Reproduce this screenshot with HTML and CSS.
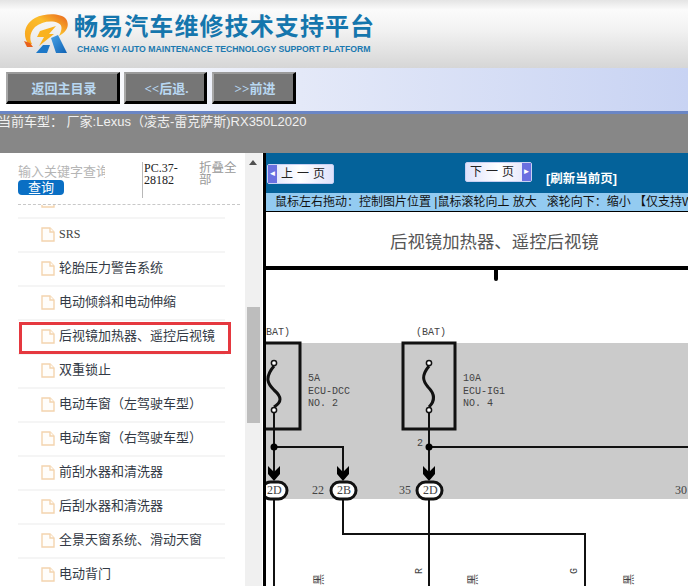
FILE: index.html
```html
<!DOCTYPE html>
<html lang="zh-CN">
<head>
    <meta charset="UTF-8">
    <meta name="viewport" content="width=device-width, initial-scale=1.0">
    <title>畅易汽车维修技术支持平台</title>
    <link rel="stylesheet" href="styles.css">
</head>
<body>
    <header class="top">
        <svg class="logo" width="46" height="40" viewBox="0 0 46 40">
            <defs>
                <linearGradient id="ring" x1="0" y1="1" x2="1" y2="0">
                    <stop offset="0" stop-color="#f7a21b"/>
                    <stop offset="0.6" stop-color="#fbbd2c"/>
                    <stop offset="1" stop-color="#e8611c"/>
                </linearGradient>
                <linearGradient id="leg" x1="0" y1="0" x2="1" y2="1">
                    <stop offset="0" stop-color="#4aa3e6"/>
                    <stop offset="1" stop-color="#0f62b4"/>
                </linearGradient>
            </defs>
            <path d="M6 31C-1 22 1 10 12 4C22 -1 38 -1 43 5C47 11 44 18 36 22C39 16 40 11 35 9C28 6 18 8 12 13C7 18 6 25 9 30Z" fill="url(#ring)"/>
            <path d="M1 27L7 29L10 33L4 33Z" fill="#e8611c"/>
            <path d="M17 17L33 12L26 20L31 20L16 32L21 23L14 23Z" fill="#f9b21f"/>
            <path d="M13 39L20 31L27 31L24 39Z" fill="#1d78c8"/>
            <path d="M28 24L35 21L44 39L33 39Z" fill="url(#leg)"/>
        </svg>
        <div class="brand">
            <div class="brand-cn">畅易汽车维修技术支持平台</div>
            <div class="brand-en">CHANG YI AUTO MAINTENANCE TECHNOLOGY SUPPORT PLATFORM</div>
        </div>
    </header>

    <nav class="toolbar">
        <button class="nav-btn home">返回主目录</button>
        <button class="nav-btn back">&lt;&lt;后退.</button>
        <button class="nav-btn next">&gt;&gt;前进</button>
    </nav>

    <div class="car-info">当前车型： 厂家:Lexus（凌志-雷克萨斯)RX350L2020</div>

    <div class="content">
        <aside class="sidebar">
            <div class="side-panel">
                <div class="search">
                    <div class="search-box">
                        <input class="search-input" type="text" placeholder="输入关键字查询">
                        <button class="search-btn">查询</button>
                    </div>
                    <div class="doc-code">PC.37-28182</div>
                    <div class="fold-all">折叠全部</div>
                </div>
                <ul class="tree">
                    <li class="tree-item"><svg class="file" viewBox="0 0 14 15"><path d="M1 1H9L13 5V14H1Z"/><path d="M9 1V5H13"/></svg></li>
                    <li class="tree-item"><svg class="file" viewBox="0 0 14 15"><path d="M1 1H9L13 5V14H1Z"/><path d="M9 1V5H13"/></svg><span class="srs">SRS</span></li>
                    <li class="tree-item"><svg class="file" viewBox="0 0 14 15"><path d="M1 1H9L13 5V14H1Z"/><path d="M9 1V5H13"/></svg>轮胎压力警告系统</li>
                    <li class="tree-item"><svg class="file" viewBox="0 0 14 15"><path d="M1 1H9L13 5V14H1Z"/><path d="M9 1V5H13"/></svg>电动倾斜和电动伸缩</li>
                    <li class="tree-item active"><svg class="file" viewBox="0 0 14 15"><path d="M1 1H9L13 5V14H1Z"/><path d="M9 1V5H13"/></svg>后视镜加热器、遥控后视镜</li>
                    <li class="tree-item"><svg class="file" viewBox="0 0 14 15"><path d="M1 1H9L13 5V14H1Z"/><path d="M9 1V5H13"/></svg>双重锁止</li>
                    <li class="tree-item"><svg class="file" viewBox="0 0 14 15"><path d="M1 1H9L13 5V14H1Z"/><path d="M9 1V5H13"/></svg>电动车窗（左驾驶车型）</li>
                    <li class="tree-item"><svg class="file" viewBox="0 0 14 15"><path d="M1 1H9L13 5V14H1Z"/><path d="M9 1V5H13"/></svg>电动车窗（右驾驶车型）</li>
                    <li class="tree-item"><svg class="file" viewBox="0 0 14 15"><path d="M1 1H9L13 5V14H1Z"/><path d="M9 1V5H13"/></svg>前刮水器和清洗器</li>
                    <li class="tree-item"><svg class="file" viewBox="0 0 14 15"><path d="M1 1H9L13 5V14H1Z"/><path d="M9 1V5H13"/></svg>后刮水器和清洗器</li>
                    <li class="tree-item"><svg class="file" viewBox="0 0 14 15"><path d="M1 1H9L13 5V14H1Z"/><path d="M9 1V5H13"/></svg>全景天窗系统、滑动天窗</li>
                    <li class="tree-item"><svg class="file" viewBox="0 0 14 15"><path d="M1 1H9L13 5V14H1Z"/><path d="M9 1V5H13"/></svg>电动背门</li>
                </ul>
            </div>
            <div class="scrollbar">
                <div class="scroll-arrow"></div>
                <div class="scroll-thumb"></div>
            </div>
        </aside>

        <main class="viewer">
            <div class="pager">
                <button class="page-btn prev"><span class="page-arrow">◄</span><span class="page-text">上一页</span></button>
                <button class="page-btn following"><span class="page-text">下一页</span><span class="page-arrow">►</span></button>
                <a class="refresh">[刷新当前页]</a>
            </div>
            <div class="hint">鼠标左右拖动：控制图片位置 |鼠标滚轮向上 放大&nbsp;&nbsp;&nbsp;滚轮向下：缩小 【仅支持W</div>

            <!-- 电路图，坐标相对于图片左上角 -->
            <svg class="diagram" width="422" height="374" viewBox="266 212 422 374">
                <rect x="266" y="343" width="422" height="156" fill="#cbcbcb"/>
                <text class="wd-title" x="390" y="248">后视镜加热器、遥控后视镜</text>
                <rect x="266" y="266" width="422" height="4" fill="#000"/>
                <rect x="494" y="268" width="4" height="13" rx="2" fill="#000"/>

                <g class="wd-label">
                    <text x="266" y="335">BAT)</text>
                    <text x="416" y="335">(BAT)</text>
                    <text x="308" y="381">5A</text>
                    <text x="308" y="394">ECU-DCC</text>
                    <text x="308" y="403" dy="3">NO. 2</text>
                    <text x="463" y="381">10A</text>
                    <text x="463" y="394">ECU-IG1</text>
                    <text x="463" y="403" dy="3">NO. 4</text>
                    <text x="417" y="446">2</text>
                    <text class="wd-num" x="312" y="494">22</text>
                    <text class="wd-num" x="399" y="494">35</text>
                    <text class="wd-num" x="675" y="494">30</text>
                </g>

                <g class="wd-line">
                    <path class="wd-box" d="M266 343H300V429H266"/>
                    <rect class="wd-box" x="403" y="343" width="52" height="86"/>
                    <path class="wd-fuse" d="M274 366C264 378 268 384 274 390C282 397 282 402 274 407"/>
                    <path class="wd-fuse" d="M429 366C421 376 423 381 428 387C435 394 435 401 429 407"/>
                    <path d="M274 413V478M274 447H343V478M429 413V478M429 447H688"/>
                    <path d="M274 500V586M343 500V534H585V586M429 500V586"/>
                    <circle class="wd-pin" cx="274" cy="363" r="2.6"/>
                    <circle class="wd-pin" cx="274" cy="410" r="2.6"/>
                    <circle class="wd-pin" cx="429" cy="363" r="2.6"/>
                    <circle class="wd-pin" cx="429" cy="410" r="2.6"/>
                </g>
                <circle cx="274" cy="447" r="3.5"/>
                <circle cx="429" cy="447" r="3.5"/>
                <path d="M268 466L274 472L280 466V474L274 481L268 474Z"/>
                <path d="M337 466L343 472L349 466V474L343 481L337 474Z"/>
                <path d="M423 466L429 472L435 466V474L429 481L423 474Z"/>

                <rect class="wd-conn" x="262" y="482" width="25" height="17" rx="8.5"/>
                <rect class="wd-conn" x="331" y="482" width="25" height="17" rx="8.5"/>
                <rect class="wd-conn" x="417" y="482" width="25" height="17" rx="8.5"/>
                <g class="wd-label">
                    <text class="wd-num" x="267" y="494">2D</text>
                    <text class="wd-num" x="337" y="494">2B</text>
                    <text class="wd-num" x="423" y="494">2D</text>
                </g>

                <g class="wd-label">
                    <text transform="translate(422 574) rotate(-90)">R</text>
                    <text transform="translate(577 574) rotate(-90)">G</text>
                    <text class="wd-wire" transform="translate(323 585) rotate(-90)">黑</text>
                    <text class="wd-wire" transform="translate(477 585) rotate(-90)">黑</text>
                    <text class="wd-wire" transform="translate(633 585) rotate(-90)">黑</text>
                </g>
            </svg>
        </main>
    </div>
</body>
</html>
```

FILE: styles.css
```css
body {
    margin: 0;
    height: 586px;
    overflow: hidden;
    background-color: #ffffff;
    font-family: "Liberation Sans", "Noto Sans CJK SC", sans-serif;
}

/* 顶部标志区 */
.top {
    height: 68px;
    box-sizing: border-box;
    padding: 12px 0 0 23px;
    display: flex;
    background: linear-gradient(#e4e4e4 0, #fbfbfb 10px, #f2f2f2 30px, #d6d6d6 68px);
}

.logo {
    flex: none;
    margin-top: 2px;
}

.brand {
    margin-left: 5px;
}

.brand-cn {
    font-size: 24px;
    line-height: 30px;
    font-weight: bold;
    letter-spacing: 1.1px;
    color: #1576ad;
    white-space: nowrap;
}

.brand-en {
    margin: 1px 0 0 3px;
    font-size: 8.7px;
    line-height: 12px;
    font-weight: bold;
    color: #1b79b0;
    white-space: nowrap;
}

/* 导航按钮 */
.toolbar {
    height: 46px;
    box-sizing: border-box;
    padding: 4px 0 0 6px;
    display: flex;
    gap: 4px;
    background: linear-gradient(90deg, #ffffff 0, #ffffff 60px, #e4e9f8 300px, #c8d3f3 688px);
    border-bottom: 3px solid #6a86c6;
}

.nav-btn {
    height: 32px;
    padding: 0 0 0 3px;
    box-sizing: border-box;
    background-color: #767676;
    border-style: solid;
    border-width: 2px 3px 3px 2px;
    border-color: #9a9a9a #000000 #000000 #a8a8a8;
    color: #b9d8f2;
    font-family: "Liberation Serif", "Noto Sans CJK SC", serif;
    font-size: 13px;
    font-weight: bold;
}

.home { width: 114px; }
.back { width: 83px; }
.next { width: 84px; margin-left: 1px; }

.car-info {
    height: 39px;
    text-indent: -2px;
    background-color: #878787;
    color: #f0f0f0;
    font-size: 13px;
    line-height: 15px;
    white-space: nowrap;
}

.content {
    display: flex;
    height: 433px;
}

/* 左侧目录 */
.sidebar {
    flex: none;
    width: 263px;
    display: flex;
}

.side-panel {
    width: 245px;
    overflow: hidden;
    display: flex;
    flex-direction: column;
}

.search {
    flex: none;
    height: 52px;
    margin-left: 18px;
    width: 222px;
    box-sizing: border-box;
    padding-top: 9px;
    display: flex;
    border-bottom: 1px dashed #c8c8c8;
}

.search-box {
    width: 87px;
}

.search-input {
    display: block;
    width: 87px;
    height: 18px;
    padding: 0;
    border: 0;
    outline: 0;
    font-size: 13px;
    font-family: "Liberation Sans", "Noto Sans CJK SC", sans-serif;
}

.search-input::placeholder {
    color: #b5b5b5;
}

.search-btn {
    display: block;
    width: 46px;
    height: 15px;
    padding: 0;
    border: 0;
    border-radius: 4px;
    background-color: #0a6fc4;
    color: #ffffff;
    font-size: 13px;
    line-height: 15px;
    font-family: "Liberation Sans", "Noto Sans CJK SC", sans-serif;
}

.doc-code {
    width: 40px;
    height: 36px;
    margin: 0 0 0 37px;
    padding-left: 1px;
    border-left: 1px solid #b8b8b8;
    font-family: "Liberation Serif", "Noto Sans CJK SC", serif;
    font-size: 12px;
    line-height: 12px;
    color: #222222;
}

.fold-all {
    width: 38px;
    margin-left: 15px;
    font-size: 12.5px;
    line-height: 12px;
    color: #999999;
}

.tree {
    list-style: none;
    margin: -20px 0 0 18px;
    padding: 0;
    width: 207px;
}

.tree-item {
    position: relative;
    height: 34px;
    box-sizing: border-box;
    padding: 0 0 5px 23px;
    display: flex;
    align-items: center;
    border-bottom: 2px solid #f5f5f5;
    font-size: 13px;
    color: #333a45;
    white-space: nowrap;
}

.tree-item:first-child {
    clip-path: inset(20px 0 0 0);
}

.tree-item.active::after {
    content: "";
    position: absolute;
    left: 1px;
    right: -6px;
    top: 1px;
    bottom: -1px;
    border: 3px solid #e5383f;
}

.file {
    flex: none;
    width: 14px;
    height: 15px;
    margin: 4px 4px 0 0;
    fill: #fffdfa;
    stroke: #f4d4ae;
    stroke-width: 1.4;
}

.srs {
    margin-top: 4px;
    font-family: "Liberation Serif", serif;
    font-size: 12px;
    color: #444444;
}

/* 滚动条 */
.scrollbar {
    position: relative;
    width: 17px;
    margin-right: 1px;
    background-color: #f0f0f0;
}

.scroll-arrow {
    position: absolute;
    left: 4px;
    top: 7px;
    border-left: 4px solid transparent;
    border-right: 4px solid transparent;
    border-bottom: 5px solid #505050;
}

.scroll-thumb {
    position: absolute;
    left: 2px;
    right: 2px;
    top: 154px;
    height: 116px;
    background-color: #bdbdbd;
}

/* 右侧图纸 */
.viewer {
    flex: 1;
    min-width: 0;
    overflow: hidden;
    border-left: 3px solid #000000;
}

.pager {
    position: relative;
    height: 40px;
    background-color: #04629a;
}

.page-btn {
    position: absolute;
    width: 67px;
    height: 20px;
    padding: 0;
    display: flex;
    align-items: stretch;
    border: 1px solid #c9d0f2;
    border-radius: 2px;
    background: linear-gradient(90deg, #dfe2fb, #ffffff 50%, #dfe2fb);
    font-size: 12px;
    font-family: "Liberation Sans", "Noto Sans CJK SC", sans-serif;
}

.page-btn.prev {
    left: 1px;
    top: 11px;
}

.page-btn.following {
    left: 199px;
    top: 9px;
}

.page-arrow {
    width: 9px;
    background-color: #6a70e0;
    color: #ffffff;
    font-size: 8px;
    line-height: 18px;
    text-align: center;
}

.page-text {
    flex: 1;
    letter-spacing: 4px;
    line-height: 18px;
    text-align: center;
    color: #222222;
}

.refresh {
    position: absolute;
    left: 280px;
    top: 17px;
    color: #ffffff;
    font-size: 12.5px;
    line-height: 18px;
    font-weight: bold;
    white-space: nowrap;
}

.hint {
    height: 18px;
    padding-left: 9px;
    border-bottom: 1px solid #000000;
    background-color: #93cbf1;
    color: #111111;
    font-size: 12px;
    line-height: 19px;
    white-space: nowrap;
}

.diagram {
    display: block;
}

.wd-title {
    font-family: "Liberation Serif", "Noto Sans CJK SC", serif;
    font-size: 17.4px;
    fill: #555555;
}

.wd-label {
    font-family: "Liberation Mono", monospace;
    font-size: 10px;
    fill: #444444;
}

.wd-num {
    font-family: "Liberation Serif", serif;
    font-size: 12px;
}

.wd-wire {
    font-family: "Noto Sans CJK SC", sans-serif;
    font-size: 11px;
}

.wd-line {
    fill: none;
    stroke: #111111;
    stroke-width: 2;
}

.wd-box {
    stroke-width: 3;
}

.wd-fuse {
    stroke-width: 3;
}

.wd-pin {
    fill: #ffffff;
    stroke-width: 1.5;
}

.wd-conn {
    fill: #ffffff;
    stroke: #111111;
    stroke-width: 3;
}
```
